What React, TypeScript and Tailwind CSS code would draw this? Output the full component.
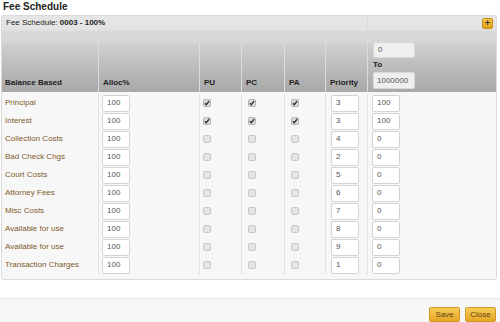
import React from "react"

type Row = { name: string; alloc: string; pu: boolean; pc: boolean; pa: boolean; priority: string; amount: string }

const rows: Row[] = [
  { name: "Principal", alloc: "100", pu: true, pc: true, pa: true, priority: "3", amount: "100" },
  { name: "Interest", alloc: "100", pu: true, pc: true, pa: true, priority: "3", amount: "100" },
  { name: "Collection Costs", alloc: "100", pu: false, pc: false, pa: false, priority: "4", amount: "0" },
  { name: "Bad Check Chgs", alloc: "100", pu: false, pc: false, pa: false, priority: "2", amount: "0" },
  { name: "Court Costs", alloc: "100", pu: false, pc: false, pa: false, priority: "5", amount: "0" },
  { name: "Attorney Fees", alloc: "100", pu: false, pc: false, pa: false, priority: "6", amount: "0" },
  { name: "Misc Costs", alloc: "100", pu: false, pc: false, pa: false, priority: "7", amount: "0" },
  { name: "Available for use", alloc: "100", pu: false, pc: false, pa: false, priority: "8", amount: "0" },
  { name: "Available for use", alloc: "100", pu: false, pc: false, pa: false, priority: "9", amount: "0" },
  { name: "Transaction Charges", alloc: "100", pu: false, pc: false, pa: false, priority: "1", amount: "0" },
]

function Check({ on }: { on: boolean }) {
  return (
    <span
      className={
        "flex h-[8px] w-[8px] items-center justify-center rounded-[2px] border " +
        (on ? "border-[#b5b5b5] bg-[#dcdcdc]" : "border-[#c8c8c8] bg-[#e6e6e6]")
      }
    >
      {on && (
        <svg width="6" height="6" viewBox="0 0 6 6">
          <path d="M0.8 3.2 L2.3 4.7 L5.2 1" stroke="#333" strokeWidth="1.3" fill="none" />
        </svg>
      )}
    </span>
  )
}

function Box({ value }: { value: string }) {
  return (
    <div className="flex h-[17px] w-[28px] items-center rounded-[2px] border border-[#d4d4d4] bg-white pl-[4px] text-[8px] text-[#555]">
      {value}
    </div>
  )
}

export default function App() {
  return (
    <div className="h-[322px] w-[500px] overflow-hidden bg-white font-['Liberation_Sans',Arial,sans-serif]">
      <div className="h-[15px] pl-[3px] text-[10px] font-bold leading-[13px] text-[#222]">Fee Schedule</div>

      <div className="mx-[1px] w-[496px] overflow-hidden rounded-[3px] border border-[#dadada] bg-[#f7f7f7]">
        {/* header */}
        <div className="flex bg-[linear-gradient(#e6e6e6_0px,#e3e3e3_14px,#dadada_15px,#d6d6d6_27px,#cfcfcf_28px,#a8a8a8_76px)]">
          <div className="flex w-[365px] flex-col">
            <div className="flex h-[14px] items-center pl-[4px] text-[8px] text-[#222]">
              Fee Schedule:&nbsp;<b>0003 - 100%</b>
            </div>
            <div className="h-[13px]" />
            <div className="grid h-[49px] grid-cols-[96px_101px_42px_43px_41px_42px] text-[8px] font-bold text-[#222]">
              {["Balance Based", "Alloc%", "PU", "PC", "PA", "Priority"].map((h, i) => (
                <div
                  key={h}
                  className={"flex items-end pb-[3px] " + (i === 0 ? "pl-[3px]" : "border-l border-[#dcdcdc] pl-[4px]")}
                >
                  {h}
                </div>
              ))}
            </div>
          </div>
          <div className="flex flex-1 flex-col border-l border-[#dcdcdc]">
            <div className="flex h-[14px] items-center justify-end pr-[3px]">
              <span className="flex h-[11px] w-[11px] items-center justify-center rounded-[2px] border border-[#c98d12] bg-[linear-gradient(#f7c64a,#e3a11c)] text-[9px] font-bold leading-none text-[#333]">
                +
              </span>
            </div>
            <div className="flex flex-col pl-[5px] pt-[12px]">
              <div className="flex h-[16px] w-[42px] items-center rounded-[2px] border border-[#d8d8d8] bg-[#efefef] pl-[4px] text-[8px] text-[#555]">0</div>
              <div className="h-[14px] pt-[1px] text-[8px] font-bold leading-[12px] text-[#222]">To</div>
              <div className="flex h-[17px] w-[42px] items-center rounded-[2px] border border-[#d8d8d8] bg-[#efefef] pl-[3px] text-[8px] text-[#555]">1000000</div>
            </div>
          </div>
        </div>

        {/* body */}
        <div className="pb-[5px] pt-[2px]">
          {rows.map((r, i) => (
            <div key={i} className="grid h-[18px] grid-cols-[96px_101px_42px_43px_41px_42px_1fr] text-[8px]">
              <div className="flex items-center pl-[3px] text-[#7d5a2c]">{r.name}</div>
              <div className="flex items-center border-l border-[#e2e2e2] pl-[3px]"><Box value={r.alloc} /></div>
              <div className="flex items-center border-l border-[#e2e2e2] pl-[3px]"><Check on={r.pu} /></div>
              <div className="flex items-center border-l border-[#e2e2e2] pl-[6px]"><Check on={r.pc} /></div>
              <div className="flex items-center border-l border-[#e2e2e2] pl-[6px]"><Check on={r.pa} /></div>
              <div className="flex items-center border-l border-[#e2e2e2] pl-[5px]"><Box value={r.priority} /></div>
              <div className="flex items-center border-l border-[#e2e2e2] pl-[4px]"><Box value={r.amount} /></div>
            </div>
          ))}
        </div>
      </div>

      <div className="mt-[18px] flex h-[30px] items-start justify-end gap-[5px] border-t border-[#e6e6e6] bg-[#f7f7f7] pr-[4px] pt-[8px]">
        {["Save", "Close"].map((b) => (
          <span
            key={b}
            className="flex h-[15px] w-[31px] items-center justify-center rounded-[2px] border border-[#d19a26] bg-[linear-gradient(#f8cc5a,#e5a622)] text-[8px] text-[#5a3f10]"
          >
            {b}
          </span>
        ))}
      </div>
    </div>
  )
}
